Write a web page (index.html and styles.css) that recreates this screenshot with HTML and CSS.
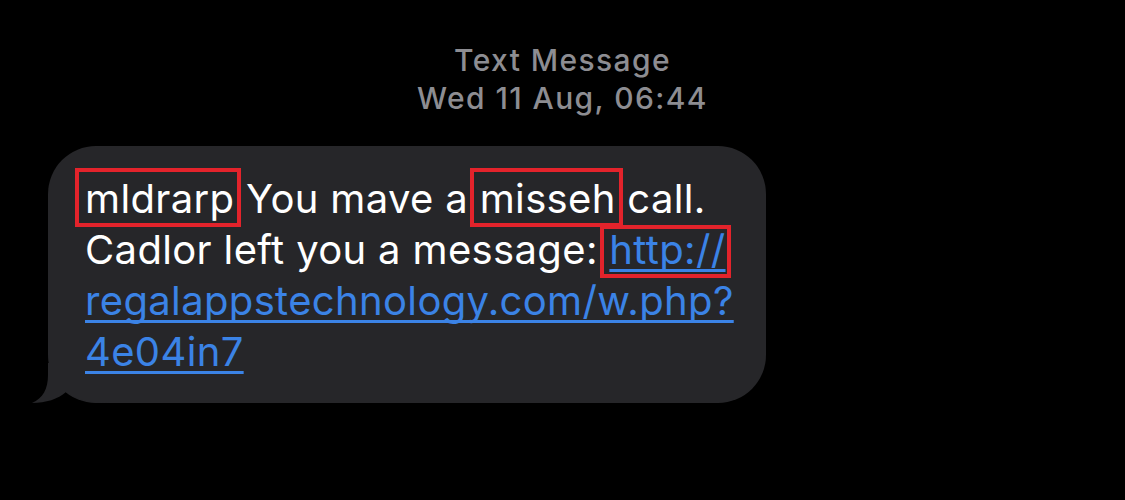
FILE: index.html
```html
<!DOCTYPE html>
<html lang="en">
<head>
<meta charset="utf-8">
<title>Text Message</title>
<link rel="stylesheet" href="styles.css">
</head>
<body>
<div class="screen">
  <header class="meta">
    <div class="meta-title">Text Message</div>
    <div class="meta-date">Wed 11 Aug, 06:44</div>
  </header>
  <div class="thread">
    <div class="bubble">
      <svg class="tail" width="80" height="40" viewBox="0 0 80 40" aria-hidden="true">
        <path d="M18,0 L18,12 C18,26 13,35 2,40 C16,40 28,36 36,29 C46,37 60,40 80,40 L80,0 Z" fill="#262629"/>
      </svg>
      <p class="msg"><span class="mark mark-a">mldrarp</span> You mave a <span class="mark mark-b">misseh</span> call.<br>Cadlor left you a message: <a class="link mark mark-c" href="#">http://</a><br><a class="link" href="#">regalappstechnology.com/w.php?</a><br><a class="link" href="#">4e04in7</a></p>
    </div>
  </div>
</div>
</body>
</html>
```
FILE: styles.css
```css
html, body {
  margin: 0;
  padding: 0;
  background: #000;
}

.screen {
  width: 1125px;
  height: 500px;
  background: #000;
  font-family: Inter, "Noto Sans", "Liberation Sans", sans-serif;
  overflow: hidden;
}

.meta {
  padding-top: 41px;
  text-align: center;
  color: #8d8d92;
  font-size: 30px;
  font-weight: 500;
  line-height: 38px;
  letter-spacing: 1.4px;
}

.thread {
  padding-top: 29px;
  padding-left: 48px;
}

.bubble {
  position: relative;
  width: 718px;
  box-sizing: border-box;
  background: #262629;
  border-radius: 48px;
  padding: 27px 30px 26px 37px;
}

.msg {
  position: relative;
  z-index: 1;
  margin: 0;
  color: #fff;
  font-size: 40px;
  line-height: 51px;
  letter-spacing: 0.35px;
  white-space: nowrap;
}

.link {
  color: #3b83e6;
  text-decoration: underline;
  text-decoration-thickness: 3px;
  text-underline-offset: 5px;
  text-decoration-skip-ink: none;
}

.mark {
  position: relative;
}

.mark::after {
  content: "";
  position: absolute;
  left: -10px;
  right: -7px;
  top: -6px;
  bottom: -4px;
  border: 4px solid #e3232b;
  pointer-events: none;
}

.mark-c::after {
  top: 0;
  right: -5px;
  left: -9px;
}

.tail {
  position: absolute;
  left: -18px;
  bottom: 0;
  display: block;
  z-index: 0;
}
```
